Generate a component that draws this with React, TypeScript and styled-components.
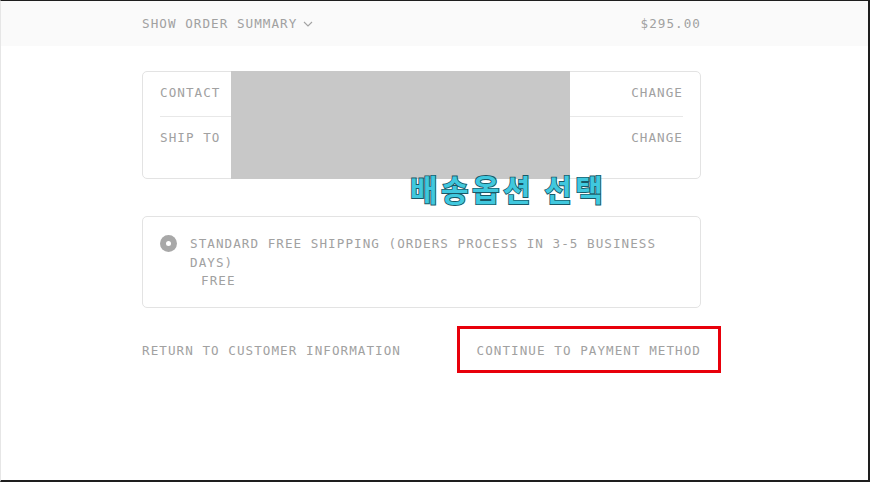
import React from 'react';
import styled, { createGlobalStyle } from 'styled-components';

const GlobalStyle = createGlobalStyle`
  html, body {
    margin: 0;
    padding: 0;
    background: #ffffff;
  }
  * {
    box-sizing: border-box;
  }
`;

const MONO = `'DejaVu Sans Mono', 'Liberation Mono', monospace`;

const StyledFrame = styled.div`
  width: 870px;
  height: 482px;
  background: #ffffff;
  border-top: 1px solid #1e1e1e;
  border-right: 2px solid #1e1e1e;
  border-bottom: 2px solid #1e1e1e;
  border-left: 1px solid #e6e6e6;
  position: relative;
  overflow: hidden;
  font-family: ${MONO};
  font-size: 12.6px;
  letter-spacing: 1.05px;
  color: #a1a1a1;
`;

const StyledHeader = styled.div`
  height: 45px;
  background: #fafafa;
  display: flex;
  align-items: center;
`;

const StyledInner = styled.div`
  width: 559px;
  margin-left: 141px;
`;

const StyledHeaderInner = styled(StyledInner)`
  display: flex;
  justify-content: space-between;
  align-items: center;
`;

const StyledSummaryToggle = styled.span`
  display: flex;
  align-items: center;
  gap: 6px;
`;

const StyledMain = styled(StyledInner)`
  padding-top: 25px;
  display: flex;
  flex-direction: column;
`;

const StyledBox = styled.div`
  border: 1px solid #e3e3e3;
  border-radius: 5px;
  padding: 0 17px;
  position: relative;
`;

const StyledRow = styled.div<{ $height: number; $divider?: boolean }>`
  height: ${p => p.$height}px;
  display: flex;
  justify-content: space-between;
  align-items: flex-start;
  padding-top: 13px;
  line-height: 16px;
  border-bottom: ${p => (p.$divider ? '1px solid #e8e8e8' : 'none')};
`;

const StyledLabel = styled.span`
  width: 88px;
`;

const StyledValue = styled.span`
  flex: 1;
`;

const StyledRedaction = styled.div`
  position: absolute;
  top: -1px;
  bottom: -1px;
  left: 88px;
  width: 339px;
  background: #c8c8c8;
`;

const StyledCaption = styled.div`
  position: absolute;
  left: 409px;
  top: 165px;
  font-family: 'Noto Sans CJK KR', 'Noto Sans', sans-serif;
  font-weight: 700;
  font-size: 30px;
  letter-spacing: 3.4px;
  color: #40c8de;
  -webkit-text-stroke: 1.8px #1a5866;
  paint-order: stroke fill;
`;

const StyledShippingBox = styled(StyledBox)`
  margin-top: 37px;
  padding: 18px 17px 16px;
  display: flex;
  gap: 13px;
  line-height: 18.5px;
`;

const StyledRadio = styled.span`
  width: 17px;
  height: 17px;
  margin-top: 0px;
  border-radius: 50%;
  background: #a8a8a8;
  flex-shrink: 0;
  display: flex;
  align-items: center;
  justify-content: center;

  &::after {
    content: '';
    width: 5px;
    height: 5px;
    border-radius: 50%;
    background: #ffffff;
  }
`;

const StyledRateText = styled.div`
  width: 480px;
`;

const StyledPrice = styled.div`
  padding-left: 11px;
`;

const StyledActions = styled.div`
  margin-top: 33px;
  display: flex;
  justify-content: space-between;
  align-items: center;
  line-height: 20px;
`;

const StyledLink = styled.span`
  cursor: pointer;
`;

const StyledContinue = styled.span`
  position: relative;
  cursor: pointer;

  &::after {
    content: '';
    position: absolute;
    left: -20px;
    right: -20px;
    top: -15px;
    bottom: -12px;
    border: 3px solid #e8000b;
  }
`;

const Chevron = () => (
  <svg width="10" height="6" viewBox="0 0 10 6" fill="none">
    <path d="M1 1l4 4 4-4" stroke="#a3a3a3" strokeWidth="1.1" />
  </svg>
);

const App: React.FC = () => {
  return (
    <>
      <GlobalStyle />
      <StyledFrame>
        <StyledHeader>
          <StyledHeaderInner>
            <StyledSummaryToggle>
              SHOW ORDER SUMMARY <Chevron />
            </StyledSummaryToggle>
            <span>$295.00</span>
          </StyledHeaderInner>
        </StyledHeader>
        <StyledMain>
          <StyledBox>
            <StyledRow $height={45} $divider>
              <StyledLabel>CONTACT</StyledLabel>
              <StyledValue />
              <StyledLink>CHANGE</StyledLink>
            </StyledRow>
            <StyledRow $height={61}>
              <StyledLabel>SHIP TO</StyledLabel>
              <StyledValue />
              <StyledLink>CHANGE</StyledLink>
            </StyledRow>
            <StyledRedaction />
          </StyledBox>
          <StyledShippingBox>
            <StyledRadio />
            <StyledRateText>
              STANDARD FREE SHIPPING (ORDERS PROCESS IN 3-5 BUSINESS DAYS)
              <StyledPrice>FREE</StyledPrice>
            </StyledRateText>
          </StyledShippingBox>
          <StyledActions>
            <StyledLink>RETURN TO CUSTOMER INFORMATION</StyledLink>
            <StyledContinue>CONTINUE TO PAYMENT METHOD</StyledContinue>
          </StyledActions>
        </StyledMain>
        <StyledCaption>배송옵션 선택</StyledCaption>
      </StyledFrame>
    </>
  );
};

export default App;
